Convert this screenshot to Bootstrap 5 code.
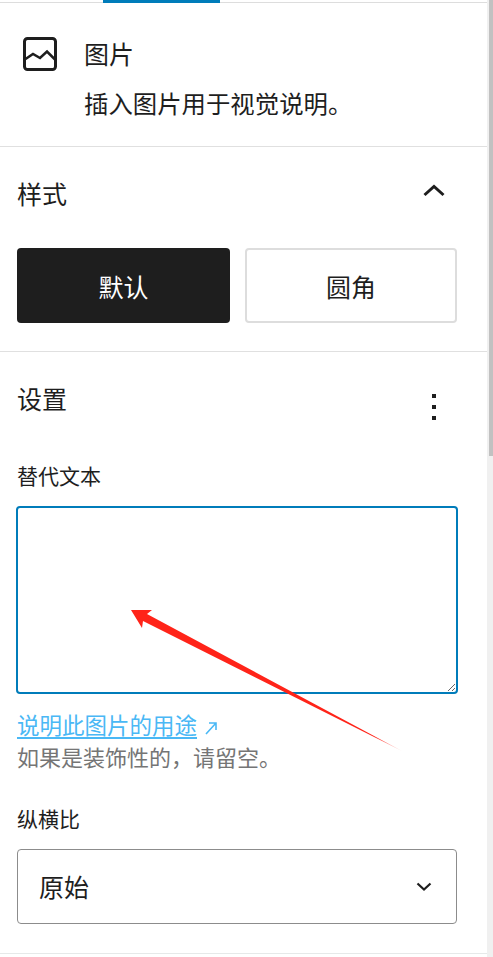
<!DOCTYPE html>
<html lang="zh-CN">
<head>
<meta charset="utf-8">
<title>图片</title>
<link href="https://cdn.jsdelivr.net/npm/bootstrap@5.3.0/dist/css/bootstrap.min.css" rel="stylesheet">
<style>
html, body { margin: 0; height: 957px; overflow: hidden; background: #fff; }
body { font-family: "Noto Sans CJK SC", "Liberation Sans", sans-serif; color: #1e1e1e; }
.shell { width: 493px; height: 957px; position: relative; }
.pane { width: 487px; height: 954px; border-bottom: 1px solid #e6e9e9; }
.scroll-track { position: absolute; top: 0; right: 0; width: 6px; height: 957px; background: #f0f0f0; padding-left: 2px; }
.scroll-thumb { width: 4px; height: 456px; background: #c1c1c1; }
.tabbar { height: 3px; border-bottom: 1px solid #ddd; }
.tabmark { width: 117px; height: 3px; margin-left: 103px; background: #007cba; }
.blockcard { height: 144px; padding: 32px 0 0 22px; border-bottom: 1px solid #e0e0e0; }
.blockicon { width: 36px; height: 36px; }
.blocktext { margin-left: 27px; }
.blocktitle { font-size: 25px; line-height: 32px; margin-top: 2px; margin-left: -1px; }
.blockdesc { font-size: 24.400px; line-height: 32px; margin-top: 18px; margin-left: -1px; }
.stylepanel { height: 205px; padding: 0 17px; border-bottom: 1px solid #e0e0e0; }
.panelhead { font-size: 25px; line-height: 32px; }
.stylehead { padding-top: 30px; height: 101px; }
.chevup { margin-right: 25px; margin-top: 6px; }
.stylechoice { width: 213px; height: 75px; font-size: 25px; line-height: 32px; border-radius: 4px; padding: 0; }
.choice-dark { background: #1e1e1e; border: 0; color: #fff; }
.choice-light { background: #fff; border: 2px solid #ddd; color: #1e1e1e; width: 212px; }
.choicegap { gap: 15px; }
.settings { padding: 0 17px; position: relative; }
.settingshead { padding-top: 30px; height: 108px; }
.morebtn { margin-right: 34px; margin-top: 9px; }
.fieldlabel { font-size: 21px; line-height: 30px; margin: 0; color: #1e1e1e; }
.alttext { display: block; width: 442px; height: 188px; margin: 16px 0 0 -1px; border: 2px solid #007cba; border-radius: 4px; background: #fff; resize: vertical; outline: 0; }
.helplink { font-size: 22.500px; line-height: 30px; color: #4ab8f5; margin-top: 15px; }
.helplink a { color: #4ab8f5; text-decoration-thickness: 2px; text-underline-offset: 3px; }
.extarrow { margin-left: 8px; vertical-align: -1px; }
.helpnote { font-size: 22px; line-height: 30px; color: #757575; margin-top: 2px; }
.ratiolabel { margin-top: 32px; }
.ratioselect { width: 440px; height: 75px; margin-top: 16px; border: 1px solid #8c8c8c; border-radius: 4px; padding: 0 24px 0 21px; font-size: 25px; }
.arrowlayer { position: absolute; left: 0; top: 0; width: 487px; height: 957px; pointer-events: none; }
</style>
</head>
<body>
<div class="shell">
  <div class="pane">
    <div class="tabbar"><div class="tabmark"></div></div>
    <div class="blockcard d-flex">
      <svg class="blockicon flex-shrink-0" viewBox="0 0 36 36" aria-hidden="true"><rect x="2.500" y="3.500" width="31" height="31" rx="3" fill="none" stroke="#1e1e1e" stroke-width="3"/><path d="M2 25 L11 19 L18 23 L25 16.500 L33 24.500" fill="none" stroke="#1e1e1e" stroke-width="2.500"/></svg>
      <div class="blocktext">
        <div class="blocktitle">图片</div>
        <div class="blockdesc">插入图片用于视觉说明。</div>
      </div>
    </div>
    <div class="stylepanel">
      <div class="panelhead stylehead d-flex justify-content-between">
        <span>样式</span>
        <svg class="chevup" width="22" height="14" viewBox="0 0 22 14" aria-hidden="true"><path d="M1.500 12 L11 3.500 L20.500 12" fill="none" stroke="#1e1e1e" stroke-width="3"/></svg>
      </div>
      <div class="d-flex choicegap">
        <button type="button" class="btn stylechoice choice-dark">默认</button>
        <button type="button" class="btn stylechoice choice-light">圆角</button>
      </div>
    </div>
    <div class="settings">
      <div class="panelhead settingshead d-flex justify-content-between">
        <span>设置</span>
        <svg class="morebtn" width="4" height="30" viewBox="0 0 4 30" aria-hidden="true"><rect x="0" y="3" width="4" height="4" fill="#1e1e1e"/><rect x="0" y="14" width="4" height="4" fill="#1e1e1e"/><rect x="0" y="25" width="4" height="4" fill="#1e1e1e"/></svg>
      </div>
      <label class="fieldlabel d-block" for="alt">替代文本</label>
      <textarea id="alt" class="alttext"></textarea>
      <div class="helplink"><a href="#">说明此图片的用途</a><svg class="extarrow" width="12" height="14" viewBox="0 0 12 14" aria-hidden="true"><path d="M1 13 L11 2 M4 2 L11 2 L11 9" fill="none" stroke="#4ab8f5" stroke-width="1.600"/></svg></div>
      <div class="helpnote">如果是装饰性的，请留空。</div>
      <div class="fieldlabel ratiolabel">纵横比</div>
      <div class="ratioselect d-flex align-items-center justify-content-between">
        <span>原始</span>
        <svg width="16" height="10" viewBox="0 0 16 10" aria-hidden="true"><path d="M1.500 1.500 L8 7.500 L14.500 1.500" fill="none" stroke="#1e1e1e" stroke-width="2.200"/></svg>
      </div>
    </div>
  </div>
  <svg class="arrowlayer" viewBox="0 0 487 957" aria-hidden="true">
    <defs><linearGradient id="tail" gradientUnits="userSpaceOnUse" x1="132" y1="610" x2="402" y2="751"><stop offset="0" stop-color="#ff2419"/><stop offset="0.9" stop-color="#ff2419"/><stop offset="1" stop-color="#ff2419" stop-opacity="0.25"/></linearGradient></defs>
    <path d="M131 610 L152 610 L147 614 L402 751 L143 621 L142 628 Z" fill="url(#tail)"/>
  </svg>
  <div class="scroll-track"><div class="scroll-thumb"></div></div>
</div>
<script src="https://cdn.jsdelivr.net/npm/bootstrap@5.3.0/dist/js/bootstrap.bundle.min.js"></script>
</body>
</html>
